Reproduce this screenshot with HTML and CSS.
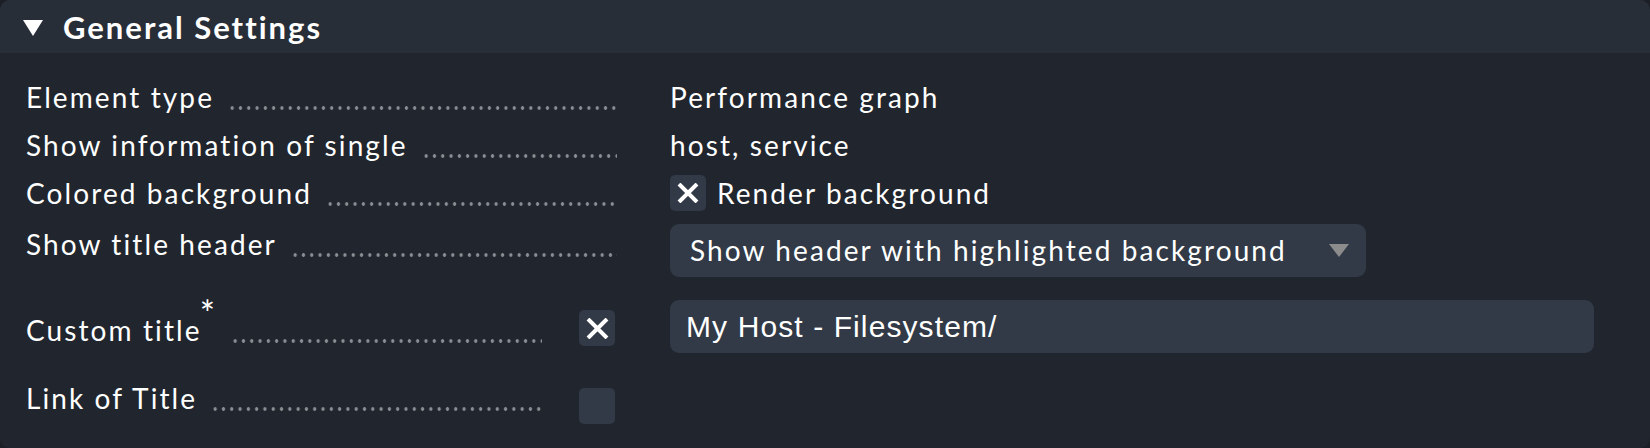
FILE: index.html
```html
<!DOCTYPE html>
<html lang="en">
<head>
    <meta charset="UTF-8">
    <title>General Settings</title>
    <link rel="stylesheet" href="styles.css">
</head>
<body>
    <div class="panel">
        <div class="panel-head">
            <svg class="fold" width="20" height="16" viewBox="0 0 20 16"><polygon points="0,0 20,0 10,16" fill="#fff"/></svg>
            <span class="panel-title">General Settings</span>
        </div>

        <div class="panel-body">
            <div class="row">
                <div class="legend"><span class="label">Element type</span><span class="dots"></span></div>
                <div class="value">Performance graph</div>
            </div>
            <div class="row">
                <div class="legend"><span class="label">Show information of single</span><span class="dots"></span></div>
                <div class="value">host, service</div>
            </div>
            <div class="row">
                <div class="legend"><span class="label">Colored background</span><span class="dots"></span></div>
                <div class="value">
                    <span class="checkbox checked">
                        <svg width="22" height="20" viewBox="0 0 22 20"><path d="M2 1 L20 19 M20 1 L2 19" stroke="#fff" stroke-width="4"/></svg>
                    </span>
                    <span class="check-text">Render background</span>
                </div>
            </div>
            <div class="row row-select">
                <div class="legend"><span class="label">Show title header</span><span class="dots"></span></div>
                <div class="value">
                    <div class="select">
                        <span>Show header with highlighted background</span>
                        <svg width="20" height="13" viewBox="0 0 20 13"><polygon points="0,0 20,0 10,13" fill="#8c8c8c"/></svg>
                    </div>
                </div>
            </div>
            <div class="row row-input">
                <div class="legend">
                    <span class="label">Custom title<sup>*</sup></span><span class="dots short"></span>
                    <span class="checkbox checked opt">
                        <svg width="23" height="21" viewBox="0 0 23 21"><path d="M2 1 L21 20 M21 1 L2 20" stroke="#fff" stroke-width="4"/></svg>
                    </span>
                </div>
                <div class="value">
                    <div class="text-input">My Host - Filesystem/</div>
                </div>
            </div>
            <div class="row row-link">
                <div class="legend">
                    <span class="label">Link of Title</span><span class="dots short"></span>
                    <span class="checkbox opt"></span>
                </div>
                <div class="value"></div>
            </div>
        </div>
    </div>
</body>
</html>
```

FILE: styles.css
```css
body {
    margin: 0;
    background-color: #1c2026;
    font-family: Lato, "Open Sans", sans-serif;
    color: #fff;
}

.panel {
    width: 1650px;
    height: 448px;
    background-color: #21262e;
    border-radius: 10px;
    overflow: hidden;
}

.panel-head {
    height: 53px;
    background-color: #282e38;
    display: flex;
    align-items: center;
    padding-left: 23px;
}

.fold {
    margin-top: 2px;
}

.panel-title {
    margin-left: 20px;
    font-size: 31px;
    font-weight: bold;
    letter-spacing: 2px;
}

.panel-body {
    padding: 20px 0 0 26px;
    font-size: 28px;
    letter-spacing: 2.1px;
}

.row {
    display: flex;
    align-items: flex-start;
}

.legend {
    width: 591px;
    display: flex;
    align-items: flex-start;
    line-height: 48px;
}

.label {
    white-space: nowrap;
}

.label sup {
    font-size: 36px;
    line-height: 0;
    vertical-align: 14px;
    margin-left: -2px;
}

.dots {
    flex: 1;
    height: 48px;
    margin-left: 14px;
    background-image: radial-gradient(circle, #8a8d92 1.5px, transparent 2px);
    background-size: 8.3px 6px;
    background-position: 0 32px;
    background-repeat: repeat-x;
}

.dots.short {
    margin-right: 37px;
}

.value {
    margin-left: 53px;
    display: flex;
    align-items: center;
    line-height: 48px;
    white-space: nowrap;
}

.checkbox {
    width: 36px;
    height: 36px;
    border-radius: 5px;
    background-color: #313a46;
    display: flex;
    align-items: center;
    justify-content: center;
    flex: none;
}

.check-text {
    margin-left: 11px;
}

.row-select {
    margin-top: 3px;
}

.select {
    margin-top: 4px;
    width: 696px;
    height: 53px;
    box-sizing: border-box;
    padding: 0 17px 0 20px;
    border-radius: 9px;
    background-color: #313a46;
    display: flex;
    align-items: center;
    justify-content: space-between;
    line-height: 53px;
}

.row-input {
    margin-top: 23px;
}

.row-input .legend {
    padding-top: 6px;
}

.row-input .opt {
    margin: 4px 2px 0 0;
}

.text-input {
    width: 924px;
    height: 53px;
    box-sizing: border-box;
    padding-left: 16px;
    border-radius: 9px;
    background-color: #313a46;
    font-family: "Liberation Sans", Arial, sans-serif;
    font-size: 30px;
    letter-spacing: 1.1px;
    line-height: 53px;
}

.row-link {
    margin-top: 20px;
}

.row-link .opt {
    margin: 14px 2px 0 0;
}
```
